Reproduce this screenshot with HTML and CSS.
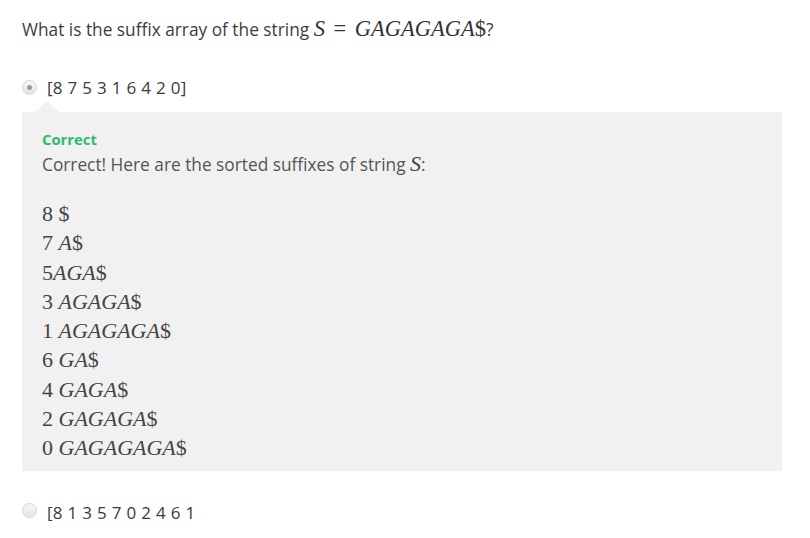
FILE: index.html
```html
<!DOCTYPE html>
<html>
<head>
<meta charset="utf-8">
<link rel="stylesheet" href="styles.css">
</head>
<body>
<div class="page">
  <p class="question">What is the suffix array of the string <span class="math"><i>S</i> <span class="op">=</span> <i>GAGAGAGA</i>$</span>?</p>

  <div class="option">
    <span class="radio checked"></span>
    <span class="label">[8 7 5 3 1 6 4 2 0]</span>
  </div>

  <div class="feedback">
    <div class="status">Correct</div>
    <div class="explain">Correct! Here are the sorted suffixes of string <i class="math">S</i>:</div>
    <ul class="suffixes">
      <li>8 $</li>
      <li>7 <i>A</i>$</li>
      <li>5<i>AGA</i>$</li>
      <li>3 <i>AGAGA</i>$</li>
      <li>1 <i>AGAGAGA</i>$</li>
      <li>6 <i>GA</i>$</li>
      <li>4 <i>GAGA</i>$</li>
      <li>2 <i>GAGAGA</i>$</li>
      <li>0 <i>GAGAGAGA</i>$</li>
    </ul>
  </div>

  <div class="option option-last">
    <span class="radio"></span>
    <span class="label clipped">[8 1 3 5 7 0 2 4 6 1</span>
  </div>
</div>
</body>
</html>
```
FILE: styles.css
```css
html, body {
  margin: 0;
  padding: 0;
  background: #fff;
}
body {
  font-family: "Open Sans", "Liberation Sans", sans-serif;
  color: #444;
}
.page {
  padding: 16px 28px 0 22px;
}
.question {
  margin: 0;
  font-size: 17.3px;
  line-height: 26px;
  color: #3d3d3d;
}
.math {
  font-family: "Liberation Serif", serif;
  font-size: 22.5px;
  color: #333;
}
.math .op {
  padding: 0 3px;
}
.option {
  display: flex;
  align-items: center;
  gap: 10px;
  margin-top: 32px;
  height: 24px;
  font-size: 17px;
  letter-spacing: 0.3px;
  color: #3a3a3a;
}
.radio {
  width: 13px;
  height: 13px;
  border-radius: 50%;
  border: 1px solid #d6d6d6;
  background: linear-gradient(#f7f7f7, #e6e6e6);
  display: flex;
  align-items: center;
  justify-content: center;
  flex: none;
}
.radio.checked::after {
  content: "";
  width: 5px;
  height: 5px;
  border-radius: 50%;
  background: #9a9a9a;
}
.feedback {
  position: relative;
  margin-top: 13px;
  background: #f1f1f1;
  padding: 17px 20px 9px 20px;
}
.feedback::before {
  content: "";
  position: absolute;
  left: 13px;
  top: -11px;
  border-left: 12px solid transparent;
  border-right: 12px solid transparent;
  border-bottom: 11px solid #f1f1f1;
}
.status {
  font-size: 14.8px;
  font-weight: 700;
  color: #2dbb6c;
  line-height: 20px;
}
.explain {
  font-size: 17.3px;
  line-height: 30px;
  color: #555;
}
.explain .math {
  font-size: 22px;
  color: #444;
}
.suffixes {
  list-style: none;
  margin: 19px 0 0 0;
  padding: 0;
  font-family: "Liberation Serif", serif;
  font-size: 22px;
  line-height: 29.25px;
  color: #444;
}
.option-last {
  margin-top: 27px;
}
.clipped {
  display: block;
  height: 20px;
  overflow: hidden;
  line-height: 24px;
  margin-top: 2px;
}
```
